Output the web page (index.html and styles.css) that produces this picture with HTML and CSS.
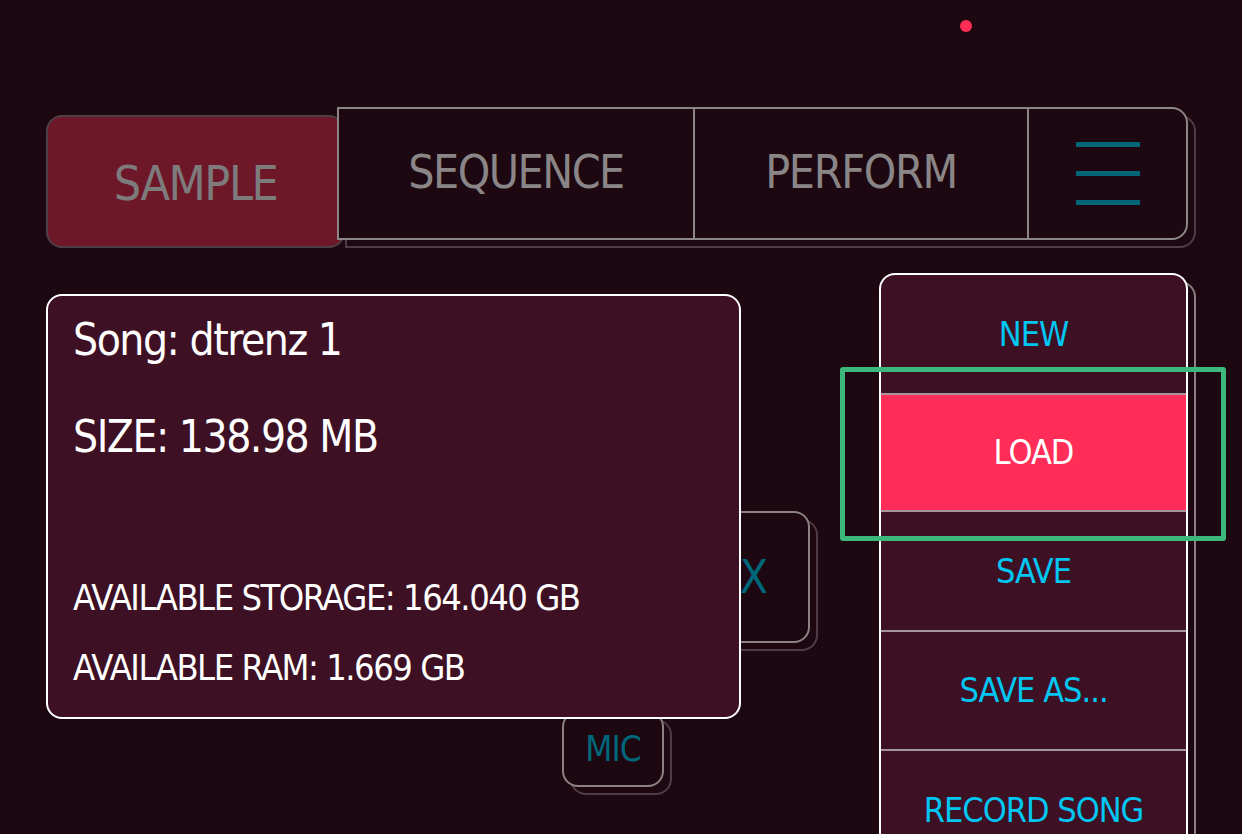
FILE: index.html
```html
<!DOCTYPE html>
<html lang="en">
<head>
<meta charset="utf-8">
<title>Song menu</title>
<link rel="stylesheet" href="styles.css">
</head>
<body>
<div class="app">
  <div class="status"><span class="dot"></span></div>

  <nav class="tabbar">
    <div class="tab-sample">SAMPLE</div>
    <div class="tab-group">
      <div class="tab tab-seq">SEQUENCE</div>
      <div class="tab tab-perf">PERFORM</div>
      <div class="tab tab-menu">
        <span class="burger"><i></i><i></i><i></i></span>
      </div>
    </div>
  </nav>

  <div class="content">
    <div class="pad pad-fx">FX</div>
    <div class="pad pad-mic">MIC</div>

    <section class="card">
      <p class="song">Song: dtrenz 1</p>
      <p class="size">SIZE: 138.98 MB</p>
      <p class="storage">AVAILABLE STORAGE: 164.040 GB</p>
      <p class="ram">AVAILABLE RAM: 1.669 GB</p>
    </section>

    <ul class="menu">
      <li class="menu-item">NEW</li>
      <li class="menu-item active">LOAD</li>
      <li class="menu-item">SAVE</li>
      <li class="menu-item">SAVE AS...</li>
      <li class="menu-item">RECORD SONG</li>
    </ul>

    <div class="highlight"></div>
  </div>
</div>
</body>
</html>
```

FILE: styles.css
```css
* { box-sizing: border-box; }

html, body {
  margin: 0;
  padding: 0;
}

body {
  width: 1242px;
  height: 834px;
  overflow: hidden;
  background: #1d0811;
  font-family: "DejaVu Sans Condensed", "Liberation Sans", sans-serif;
  color: #ffffff;
}

.app {
  padding: 0 46px;
}

/* status dot */
.status {
  height: 107px;
  padding-top: 20px;
}
.dot {
  display: block;
  width: 12px;
  height: 12px;
  margin-left: 914px;
  border-radius: 50%;
  background: #ff2d55;
}

/* tab bar */
.tabbar {
  display: flex;
  width: 1150px;
  height: 141px;
}

.tab-sample {
  width: 299px;
  height: 133px;
  margin-top: 8px;
  margin-right: -8px;
  border: 2px solid #4d3f46;
  border-radius: 16px;
  background: #6e1729;
  color: #7d7b7c;
  font-size: 48px;
  letter-spacing: -1.5px;
  display: flex;
  align-items: center;
  justify-content: center;
  padding-top: 2px;
}

.tab-group {
  position: relative;
  z-index: 1;
  display: flex;
  width: 851px;
  height: 133px;
  border: 2px solid #8d8689;
  border-radius: 0 16px 16px 0;
  background: #1d0811;
  box-shadow: 8px 8px 0 -2px #1d0811, 8px 8px 0 0 #4d3c44;
}

.tab {
  display: flex;
  align-items: center;
  justify-content: center;
  color: #8a8587;
  font-size: 46px;
  letter-spacing: -1.5px;
  padding-bottom: 4px;
}

.tab-seq { width: 354px; }
.tab-perf { width: 334px; border-left: 2px solid #8d8689; letter-spacing: -1.3px; }
.tab-menu { flex: 1; border-left: 2px solid #8d8689; padding-bottom: 0; }

.burger {
  display: flex;
  flex-direction: column;
  gap: 24px;
}
.burger i {
  display: block;
  width: 64px;
  height: 5px;
  background: #006676;
}

/* content */
.content {
  position: relative;
  display: flex;
  justify-content: space-between;
  align-items: flex-start;
  width: 1142px;
  margin-top: 25px;
}

.pad {
  position: absolute;
  border: 2px solid #8c8286;
  border-radius: 16px;
  background: #1d0811;
  color: #00677a;
  display: flex;
  align-items: center;
  justify-content: center;
  box-shadow: 8px 8px 0 -2px #1d0811, 8px 8px 0 0 #4d3c44;
}

.pad-fx {
  left: 628px;
  top: 238px;
  width: 136px;
  height: 132px;
  font-size: 46px;
  letter-spacing: -1px;
}

.pad-mic {
  left: 516px;
  top: 438px;
  width: 102px;
  height: 76px;
  font-size: 35px;
  letter-spacing: -1px;
}

.card {
  position: relative;
  z-index: 2;
  width: 695px;
  height: 425px;
  margin-top: 21px;
  padding: 21px 25px 0;
  border: 2px solid #ffffff;
  border-radius: 16px;
  background: #3e1024;
}

.card p {
  margin: 0;
  line-height: 1;
  letter-spacing: -1.5px;
}

.card .song { font-size: 44px; margin-top: 1px; }
.card .size { font-size: 44px; margin-top: 53px; }
.card .storage { font-size: 36px; margin-top: 121px; }
.card .ram { font-size: 36px; margin-top: 34px; }

.menu {
  position: relative;
  z-index: 2;
  width: 309px;
  height: 600px;
  margin: 0;
  padding: 0;
  list-style: none;
  border: 2px solid #ffffff;
  border-bottom: none;
  border-radius: 16px 16px 0 0;
  background: #3e1024;
  box-shadow: 8px 8px 0 -2px #1d0811, 8px 8px 0 0 #8a7d83;
}

.menu-item {
  height: 119.5px;
  display: flex;
  align-items: center;
  justify-content: center;
  color: #00c6f2;
  font-size: 34px;
  letter-spacing: -1px;
  border-bottom: 2px solid #a6959c;
}

.menu-item.active {
  background: #ff2d57;
  color: #ffffff;
  border-top: 2px solid #a6959c;
  margin-top: -2px;
}

.highlight {
  position: absolute;
  z-index: 3;
  left: 794px;
  top: 94px;
  width: 386px;
  height: 174px;
  border: 5px solid #3db87c;
  border-radius: 3px;
}
```
